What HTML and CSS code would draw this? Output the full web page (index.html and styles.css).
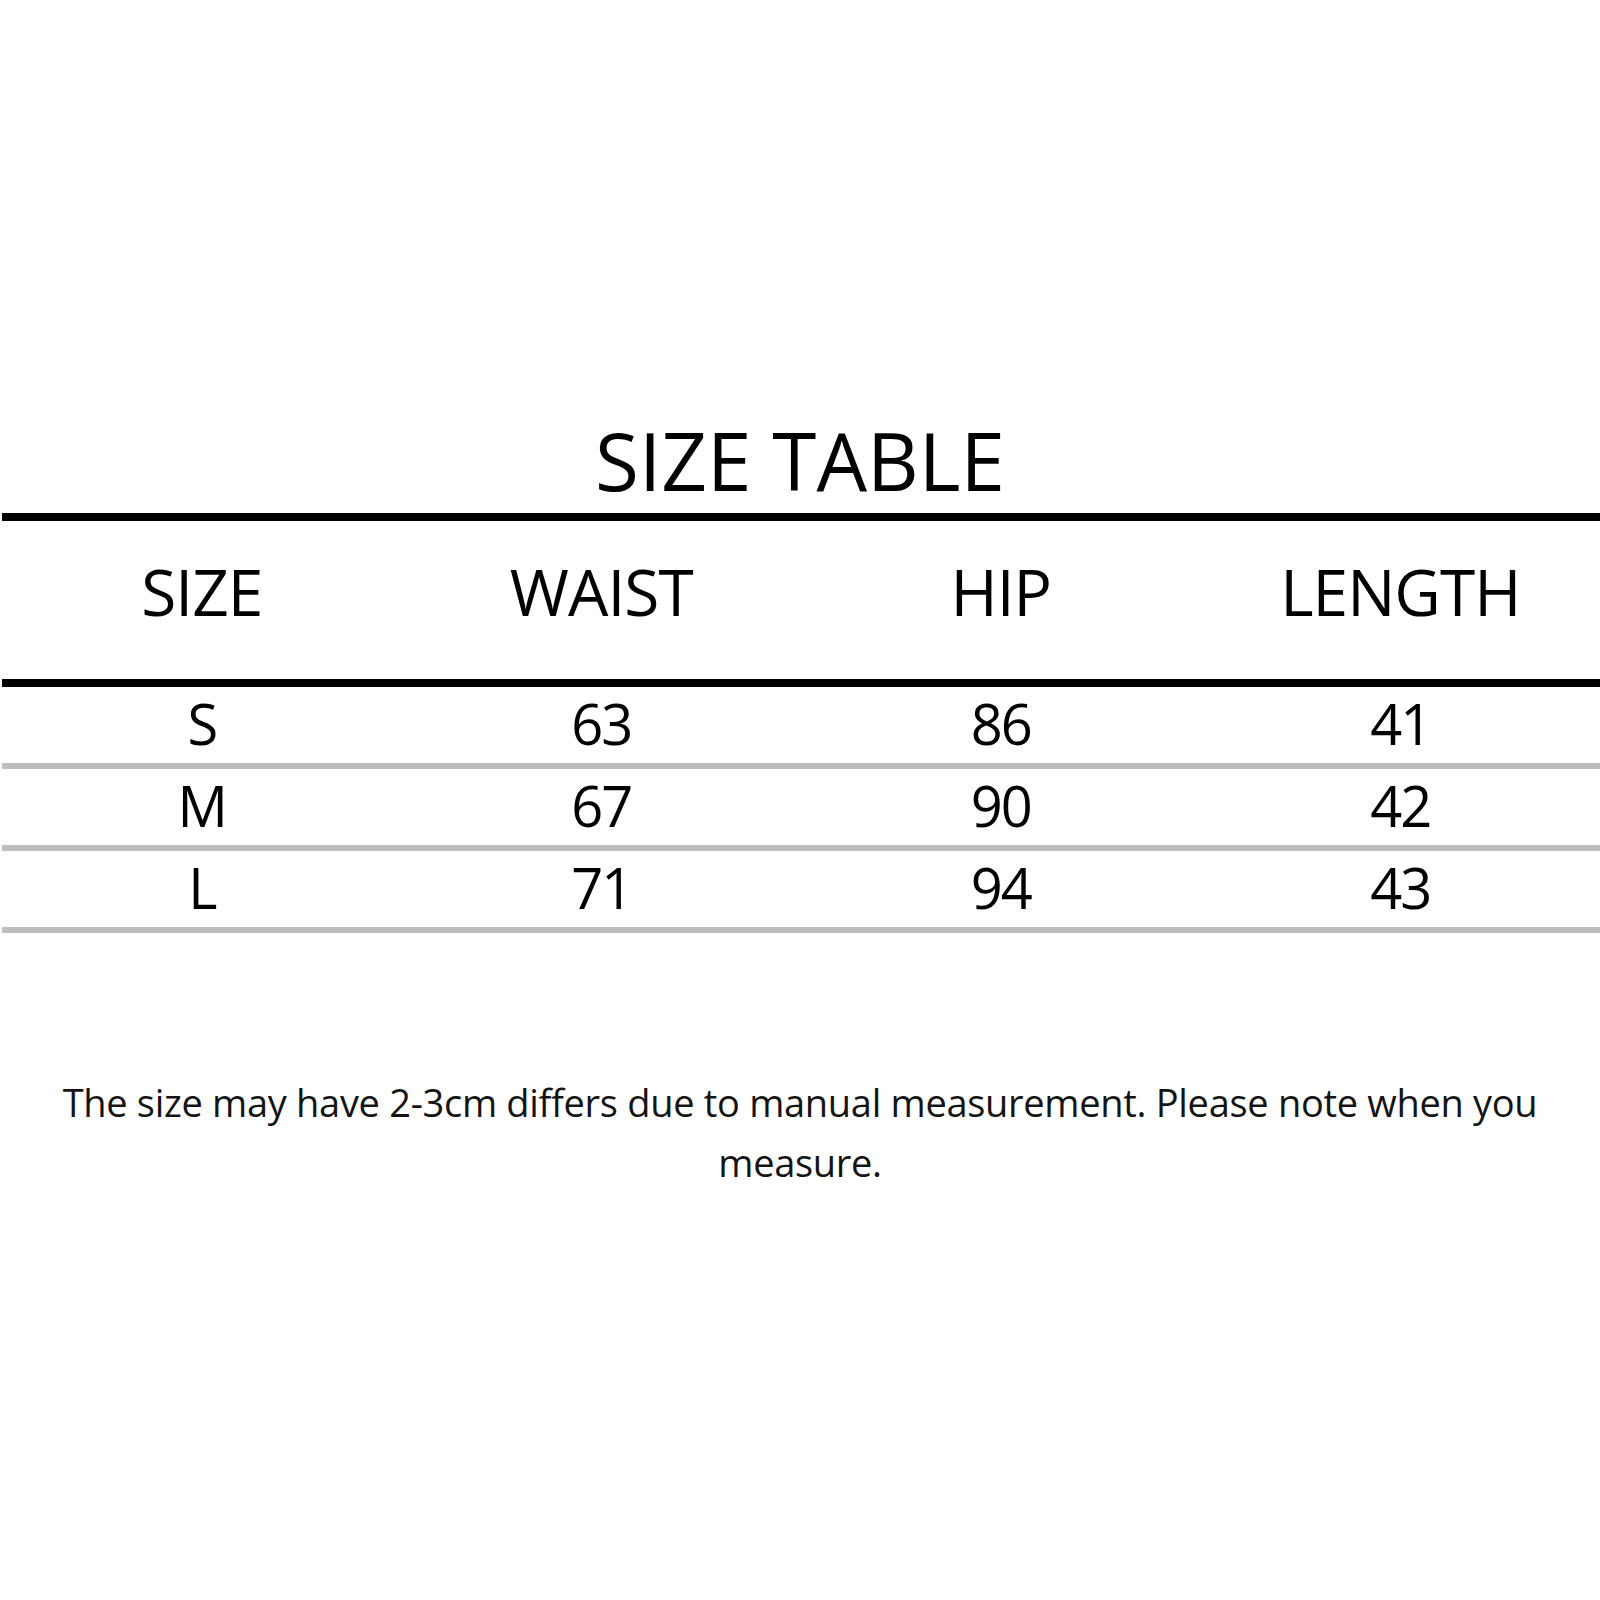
FILE: index.html
```html
<!DOCTYPE html>
<html lang="en">
<head>
<meta charset="utf-8">
<title>Size Table</title>
<link rel="stylesheet" href="styles.css">
</head>
<body>
<main class="page">
  <h1 class="title">SIZE TABLE</h1>
  <div class="table">
    <div class="row head">
      <div class="cell">SIZE</div>
      <div class="cell">WAIST</div>
      <div class="cell">HIP</div>
      <div class="cell">LENGTH</div>
    </div>
    <div class="row body">
      <div class="cell">S</div>
      <div class="cell">63</div>
      <div class="cell">86</div>
      <div class="cell">41</div>
    </div>
    <div class="row body">
      <div class="cell">M</div>
      <div class="cell">67</div>
      <div class="cell">90</div>
      <div class="cell">42</div>
    </div>
    <div class="row body">
      <div class="cell">L</div>
      <div class="cell">71</div>
      <div class="cell">94</div>
      <div class="cell">43</div>
    </div>
  </div>
  <p class="note">The size may have 2-3cm differs due to manual measurement. Please note when you measure.</p>
</main>
</body>
</html>
```

FILE: styles.css
```css
html, body {
  margin: 0;
  padding: 0;
  background: #ffffff;
}

body {
  font-family: "Open Sans", "Noto Sans", sans-serif;
  color: #000;
}

.page {
  padding-top: 410px;
}

.title {
  margin: 0;
  height: 103px;
  font-size: 80px;
  line-height: 100px;
  font-weight: 400;
  text-align: center;
  letter-spacing: 0;
}

.table {
  margin-left: 2px;
  border-top: 8px solid #000;
}

.row {
  display: grid;
  grid-template-columns: repeat(4, 1fr);
  text-align: center;
}

.head {
  font-size: 64px;
  line-height: 142px;
  padding-bottom: 16px;
  border-bottom: 8px solid #000;
  letter-spacing: -1px;
}

.body {
  font-size: 56px;
  line-height: 72px;
  padding-bottom: 4px;
  border-bottom: 6px solid #bdbdbd;
  letter-spacing: -2px;
}

.note {
  margin: 139px auto 0;
  padding: 0 40px;
  font-size: 38px;
  line-height: 60px;
  text-align: center;
  color: #141414;
  letter-spacing: -0.3px;
}
```
